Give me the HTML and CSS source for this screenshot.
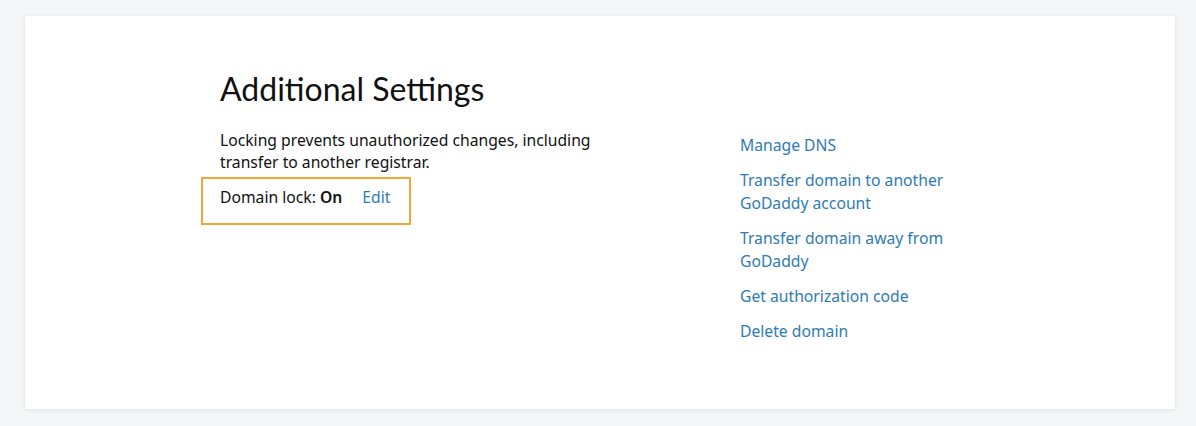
FILE: index.html
```html
<!DOCTYPE html>
<html lang="en">
<head>
<meta charset="utf-8">
<title>Additional Settings</title>
<link rel="stylesheet" href="styles.css">
</head>
<body>
<div class="page">
  <section class="card">
    <div class="content">
      <div class="left">
        <h2 class="title">Additional Settings</h2>
        <p class="desc">Locking prevents unauthorized changes, including transfer to another registrar.</p>
        <div class="lockbox">
          <span class="lock-label">Domain lock: <strong>On</strong></span>
          <a class="link edit" href="#">Edit</a>
        </div>
      </div>
      <ul class="actions">
        <li><a class="link" href="#">Manage DNS</a></li>
        <li><a class="link" href="#">Transfer domain to another<br>GoDaddy account</a></li>
        <li><a class="link" href="#">Transfer domain away from<br>GoDaddy</a></li>
        <li><a class="link" href="#">Get authorization code</a></li>
        <li><a class="link" href="#">Delete domain</a></li>
      </ul>
    </div>
  </section>
</div>
</body>
</html>
```
FILE: styles.css
```css
html, body {
  margin: 0;
  padding: 0;
}
body {
  background: #f5f6f8;
  font-family: "Noto Sans", "Liberation Sans", sans-serif;
  color: #111;
  width: 1196px;
  height: 426px;
  overflow: hidden;
}
.page {
  padding: 16px 21px 0 25px;
}
.card {
  background: #fff;
  height: 393px;
  box-sizing: border-box;
  box-shadow: 0 1px 4px rgba(0, 0, 0, 0.1);
  padding: 53px 0 0 195px;
}
.content {
  display: grid;
  grid-template-columns: 520px 300px;
}
.title {
  margin: 0;
  font-family: "Lato", "Noto Sans", sans-serif;
  font-weight: 400;
  font-size: 32px;
  line-height: 40px;
  color: #111;
}
.desc {
  margin: 20px 0 0;
  font-size: 15.7px;
  line-height: 22px;
  width: 400px;
}
.lockbox {
  margin: 4px 0 0 -19px;
  width: 210px;
  height: 48px;
  box-sizing: border-box;
  border: 2px solid #f2a633;
  padding: 7px 0 0 17px;
  font-size: 15.7px;
  line-height: 22px;
  display: flex;
  gap: 20px;
}
.lock-label strong {
  font-weight: 600;
}
.link {
  color: #2e7bb5;
  text-decoration: none;
}
.actions {
  list-style: none;
  margin: 65px 0 0;
  padding: 0;
  display: flex;
  flex-direction: column;
  gap: 12px;
  font-size: 15.7px;
  line-height: 23px;
}
```
